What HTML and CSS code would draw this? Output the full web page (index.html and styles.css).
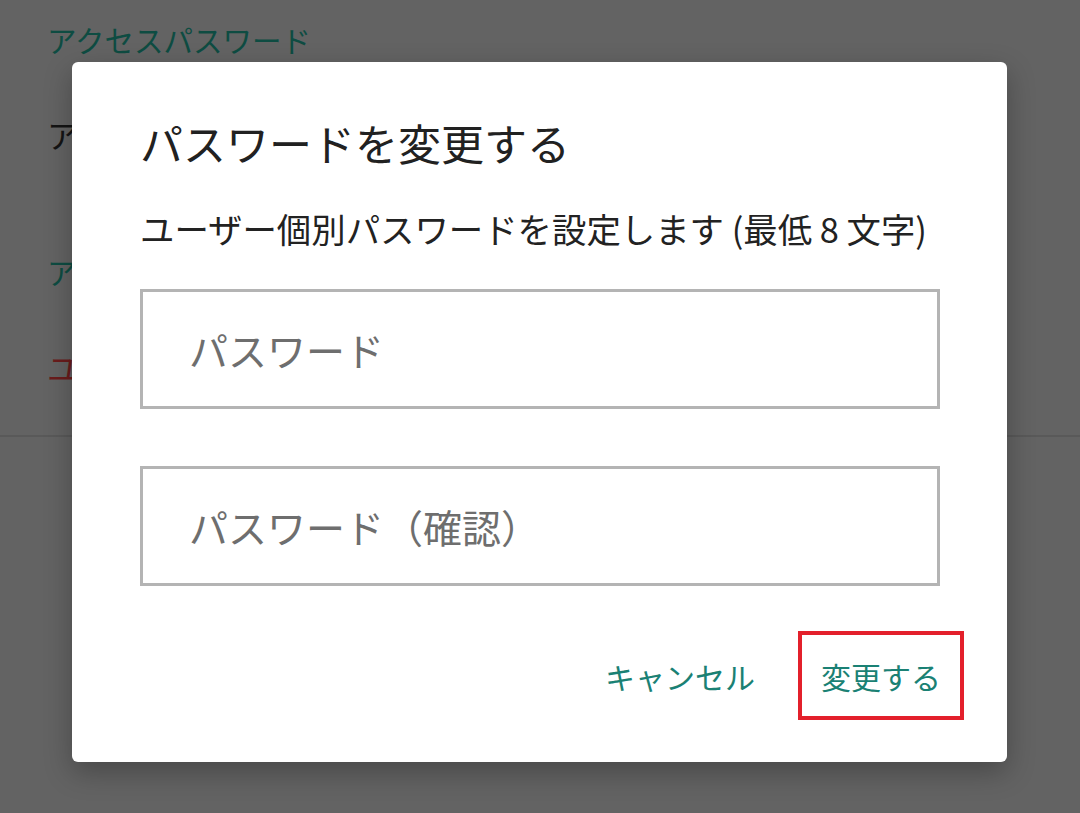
FILE: index.html
```html
<!DOCTYPE html>
<html lang="ja">
<head>
<meta charset="utf-8">
<title>パスワードを変更する</title>
<link rel="stylesheet" href="styles.css">
</head>
<body>
<div class="bg">
  <div class="bg-heading first">アクセスパスワード</div>
  <div class="bg-item">ア</div>
  <div class="bg-heading second">ア</div>
  <div class="bg-item danger">ユ</div>
  <div class="bg-divider"></div>
</div>

<div class="dialog">
  <div class="dialog-title">パスワードを変更する</div>
  <div class="dialog-text">ユーザー個別パスワードを設定します (最低 8 文字)</div>
  <input class="field first-field" type="password" placeholder="パスワード">
  <input class="field second-field" type="password" placeholder="パスワード（確認）">
  <div class="actions">
    <button class="btn">キャンセル</button>
    <button class="btn btn-marked">変更する</button>
  </div>
</div>
</body>
</html>
```

FILE: styles.css
```css
html, body {
  margin: 0;
  padding: 0;
}
body {
  width: 1080px;
  height: 813px;
  overflow: hidden;
  background: #636363;
  font-family: "Noto Sans CJK JP", "Noto Sans", sans-serif;
  position: relative;
}
.bg {
  display: flex;
  flex-direction: column;
  align-items: flex-start;
  padding-top: 25px;
}
.bg-heading,
.bg-item {
  margin-left: 47px;
  white-space: nowrap;
}
.bg-heading {
  color: #0e4c42;
  font-size: 29.5px;
  line-height: 29px;
}
.bg-heading.second {
  margin-top: 107px;
}
.bg-item {
  color: #141414;
  font-size: 32px;
  line-height: 32px;
  margin-top: 64px;
}
.bg-item.danger {
  color: #6a1c1c;
  margin-top: 65px;
}
.bg-divider {
  align-self: stretch;
  margin-top: 52px;
  height: 2px;
  background: #595959;
}

.dialog {
  position: absolute;
  left: 72px;
  top: 62px;
  width: 935px;
  height: 700px;
  box-sizing: border-box;
  background: #ffffff;
  border-radius: 6px;
  box-shadow: 0 10px 28px rgba(0, 0, 0, 0.28);
  padding: 59px 67px 0 68px;
  display: flex;
  flex-direction: column;
}
.dialog-title {
  font-size: 43px;
  line-height: 43px;
  color: #212121;
  white-space: nowrap;
}
.dialog-text {
  margin-top: 47px;
  font-size: 34.4px;
  line-height: 34px;
  color: #222222;
  white-space: nowrap;
}
.field {
  display: block;
  box-sizing: border-box;
  width: 100%;
  height: 120px;
  margin: 0;
  border: 3px solid #b4b4b4;
  border-radius: 0;
  background: #ffffff;
  padding: 0 0 0 46px;
  font-family: "Noto Sans CJK JP", "Noto Sans", sans-serif;
  font-size: 39px;
  color: #222222;
  outline: none;
}
.field::placeholder {
  color: #6e6e6e;
  opacity: 1;
}
.first-field {
  margin-top: 44px;
}
.second-field {
  margin-top: 57px;
}
.actions {
  margin-top: 45px;
  margin-right: -24px;
  display: flex;
  justify-content: flex-end;
  gap: 20px;
}
.btn {
  box-sizing: border-box;
  height: 89px;
  padding: 0 19px;
  border: 4px solid transparent;
  background: transparent;
  font-family: "Noto Sans CJK JP", "Noto Sans", sans-serif;
  font-size: 30px;
  line-height: 30px;
  color: #1a8174;
  cursor: pointer;
}
.btn-marked {
  border-color: #e3202b;
}
```
